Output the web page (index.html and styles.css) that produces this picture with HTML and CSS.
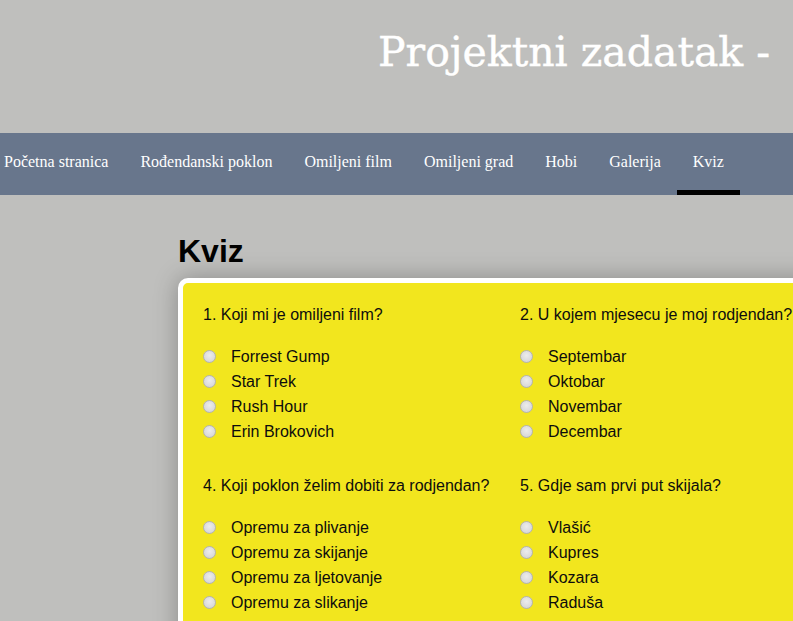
FILE: index.html
```html
<!DOCTYPE html>
<html lang="bs">
<head>
<meta charset="utf-8">
<title>Kviz</title>
<link rel="stylesheet" href="styles.css">
</head>
<body>
<header class="site-header">
  <h1 class="site-title">Projektni zadatak -</h1>
</header>
<nav class="main-nav">
  <a class="nav-link" href="#">Početna stranica</a>
  <a class="nav-link" href="#">Rođendanski poklon</a>
  <a class="nav-link" href="#">Omiljeni film</a>
  <a class="nav-link" href="#">Omiljeni grad</a>
  <a class="nav-link" href="#">Hobi</a>
  <a class="nav-link" href="#">Galerija</a>
  <a class="nav-link active" href="#">Kviz</a>
</nav>
<main class="content">
  <h2 class="page-title">Kviz</h2>
  <form class="quiz-card">
    <div class="question">
      <p class="q-text">1. Koji mi je omiljeni film?</p>
      <label class="option"><input type="radio" name="q1"><span>Forrest Gump</span></label>
      <label class="option"><input type="radio" name="q1"><span>Star Trek</span></label>
      <label class="option"><input type="radio" name="q1"><span>Rush Hour</span></label>
      <label class="option"><input type="radio" name="q1"><span>Erin Brokovich</span></label>
    </div>
    <div class="question">
      <p class="q-text">2. U kojem mjesecu je moj rodjendan?</p>
      <label class="option"><input type="radio" name="q2"><span>Septembar</span></label>
      <label class="option"><input type="radio" name="q2"><span>Oktobar</span></label>
      <label class="option"><input type="radio" name="q2"><span>Novembar</span></label>
      <label class="option"><input type="radio" name="q2"><span>Decembar</span></label>
    </div>
    <div class="question">
      <p class="q-text">4. Koji poklon želim dobiti za rodjendan?</p>
      <label class="option"><input type="radio" name="q4"><span>Opremu za plivanje</span></label>
      <label class="option"><input type="radio" name="q4"><span>Opremu za skijanje</span></label>
      <label class="option"><input type="radio" name="q4"><span>Opremu za ljetovanje</span></label>
      <label class="option"><input type="radio" name="q4"><span>Opremu za slikanje</span></label>
    </div>
    <div class="question">
      <p class="q-text">5. Gdje sam prvi put skijala?</p>
      <label class="option"><input type="radio" name="q5"><span>Vlašić</span></label>
      <label class="option"><input type="radio" name="q5"><span>Kupres</span></label>
      <label class="option"><input type="radio" name="q5"><span>Kozara</span></label>
      <label class="option"><input type="radio" name="q5"><span>Raduša</span></label>
    </div>
  </form>
</main>
</body>
</html>
```

FILE: styles.css
```css
html, body {
  margin: 0;
  padding: 0;
  overflow: hidden;
}
body {
  background: #bfbfbd;
  width: 793px;
  height: 621px;
}
.site-header {
  height: 133px;
  overflow: hidden;
}
.site-title {
  margin: 0;
  padding: 26px 0 0 378px;
  font-family: "DejaVu Serif", "Liberation Serif", serif;
  font-weight: normal;
  font-size: 41px;
  line-height: 52px;
  color: #ffffff;
  white-space: nowrap;
  -webkit-text-stroke: 0.4px #ffffff;
}
.main-nav {
  display: flex;
  height: 62px;
  background: #68768c;
  margin-left: -12px;
}
.nav-link {
  display: flex;
  align-items: center;
  box-sizing: border-box;
  height: 62px;
  padding: 1px 16px 0;
  font-family: "Liberation Serif", serif;
  font-size: 16px;
  color: #ffffff;
  text-decoration: none;
  border-bottom: 5px solid transparent;
}
.nav-link.active {
  border-bottom-color: #000000;
}
.content {
  padding-left: 178px;
}
.page-title {
  margin: 0;
  padding-top: 38px;
  height: 45px;
  font-family: "Liberation Sans", Arial, sans-serif;
  font-weight: bold;
  font-size: 32px;
  line-height: 36px;
  color: #000000;
}
.quiz-card {
  display: grid;
  grid-template-columns: repeat(2, 317px);
  row-gap: 33px;
  width: 1000px;
  margin: 0;
  padding: 23px 0 30px 20px;
  background: #f2e61e;
  border: 5px solid #ffffff;
  border-radius: 10px;
  box-shadow: 0 0 24px rgba(0, 0, 0, 0.28);
  font-family: "Liberation Sans", Arial, sans-serif;
  font-size: 16px;
  color: #0d0d0d;
}
.question {
  display: flex;
  flex-direction: column;
}
.q-text {
  margin: 0 0 20px;
  line-height: 18px;
  white-space: nowrap;
}
.option {
  display: flex;
  align-items: center;
  height: 25px;
  white-space: nowrap;
}
.option input {
  appearance: none;
  -webkit-appearance: none;
  flex: none;
  box-sizing: border-box;
  width: 13px;
  height: 13px;
  margin: 0 15px 1px 0;
  border-radius: 50%;
  border: 1px solid #b3b3b3;
  background: radial-gradient(circle at 50% 40%, #ececec 0%, #dcdcdc 60%, #cfcfcf 100%);
}
```
